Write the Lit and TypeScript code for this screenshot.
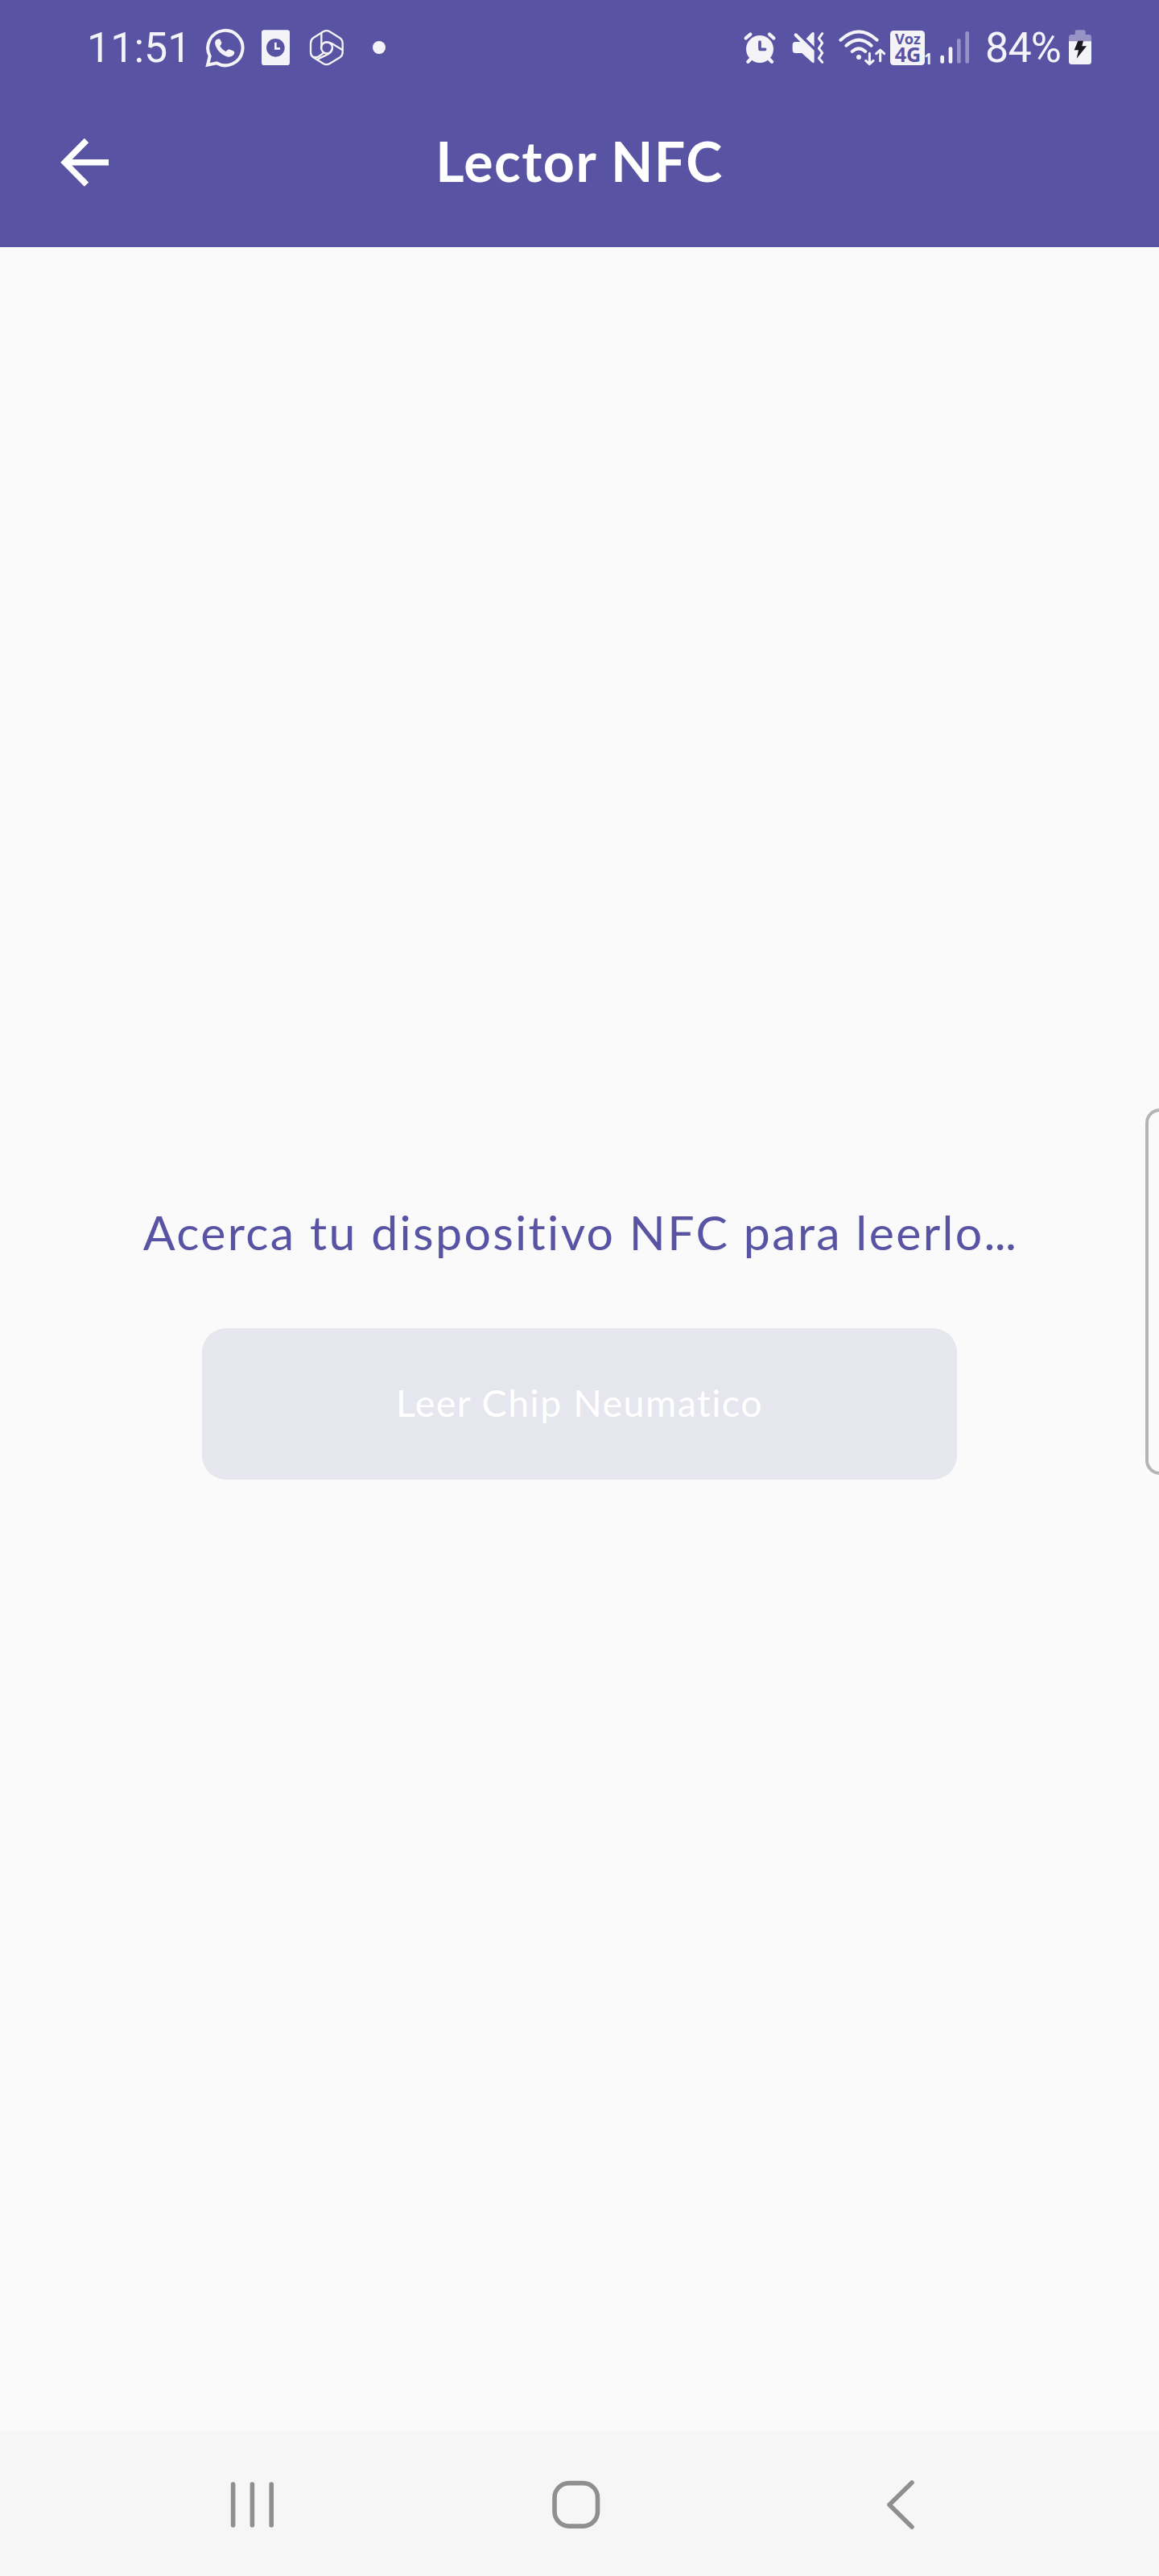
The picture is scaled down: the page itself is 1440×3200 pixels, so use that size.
import { LitElement, html, css } from "lit";
import { customElement, property } from "lit/decorators.js";

@customElement("status-bar")
class StatusBar extends LitElement {
  @property() time = "11:51";
  @property() battery = "84%";

  static styles = css`
    :host { display: flex; justify-content: space-between; box-sizing: border-box; height: 118px; padding: 0 84px 0 108px; color: #f4f3f8; }
    .group { display: flex; align-items: flex-start; }
    svg { display: block; flex: none; fill: #f4f3f8; overflow: visible; }
    .line { fill: none; stroke: #f4f3f8; stroke-linecap: round; stroke-linejoin: round; }
    .sharp { stroke-linecap: butt; stroke-linejoin: miter; }
    .cut { fill: #5853a2; }
    .cutline { fill: none; stroke: #5853a2; }
    .dim { fill: #9793c4; }
    .dark { fill: #1c1a22; }
    .label { font-family: "Roboto", sans-serif; font-size: 52px; line-height: 60px; margin-top: 30px; white-space: nowrap; }
    .time { width: 147px; }
    .percent { width: 104px; letter-spacing: -0.8px; }
    .tag { font-family: "Open Sans", "Noto Sans", sans-serif; font-weight: 700; }
    .whatsapp { margin: 35px 22px 0 0; }
    .card { margin: 37px 25px 0 0; }
    .hex { margin: 37px 36px 0 0; }
    .dot { margin-top: 51px; }
    .alarm { margin: 40px 20px 0 0; }
    .mute { margin: 40px 18px 0 0; }
    .wifi { margin: 37px 6px 0 0; }
    .volte { margin: 38px 11px 0 0; }
    .signal { margin: 39px 19px 0 0; }
    .cell { margin-top: 37px; }
  `;

  render() {
    return html`
      <div class="group">
        <span class="label time">${this.time}</span>
        <svg class="whatsapp" width="48" height="49" viewBox="45 45 144 147">
          <path class="line sharp" stroke-width="12" d="M62 149 L54 182 L87 175 A65 65 0 1 0 62 149Z" />
          <path d="M84 90q8-8 16-4l6 12q1 6-6 13q8 15 22 21q7-8 11-8q4 0 20 8q3 9-6 16q-10 6-22 3Q96 141 84 112Q79 98 84 90Z" />
        </svg>
        <svg class="card" width="35" height="44" viewBox="255 51 105 132">
          <rect x="255" y="52" width="105" height="131" rx="10" />
          <circle class="cut" cx="307" cy="118" r="34" />
          <path class="line sharp" stroke-width="8" d="M307 98V121H324" />
        </svg>
        <svg class="hex" width="42" height="44" viewBox="434 51 126 132">
          <g class="line" stroke-width="7">
            <path d="M484 58Q496 51 508 58L545 81Q556 88 556 101V135Q556 147 546 154L508 177Q496 184 484 177L447 154Q437 147 437 135V101Q437 88 447 81Z" />
            <circle cx="497" cy="118" r="21" />
            <path d="M477 63V118M487 99Q500 94 516 102L555 126M517 122Q516 132 505 140L461 162M445 152Q458 156 468 150L486 136" />
          </g>
        </svg>
        <svg class="dot" width="16" height="16" viewBox="0 0 16 16"><circle cx="8" cy="8" r="8" /></svg>
      </div>
      <div class="group">
        <svg class="alarm" width="40" height="40" viewBox="72 60 120 120">
          <circle cx="132" cy="123" r="51" />
          <path class="line" stroke-width="13" d="M80 82L97 68M168 68L184 82M88 170L102 156M177 170L163 156" />
          <path class="cutline" stroke-width="11" stroke-linecap="round" stroke-linejoin="round" d="M132 96V124H152" />
        </svg>
        <svg class="mute" width="40" height="40" viewBox="253 60 120 120">
          <path d="M262 66Q266 62 271 65L336 128V170Q335 177 329 173L290 138H266Q255 138 255 127V107Q255 96 266 96H284L263 75Q259 70 262 66ZM336 64V114L306 84L328 61Q335 58 336 64Z" />
          <path class="line" stroke-width="9" d="M366 65L353 83L366 100L353 120L366 137L353 157L366 172" />
        </svg>
        <svg class="wifi" width="58" height="44" viewBox="427 51 174 132">
          <path class="line" stroke-width="12" d="M434 89Q502 27 570 89M455 110Q502 68 549 110M477 132Q502 110 527 132" />
          <circle cx="502" cy="153" r="9" />
          <path class="line" stroke-width="9" d="M542 139V178M528 166L542 179L556 166M582 167V127M567 140L582 126L597 140" />
        </svg>
        <svg class="volte" width="51" height="43" viewBox="618 54 153 129">
          <rect x="618" y="54" width="129" height="129" rx="13" />
          <text class="tag cut" x="636" y="105" font-size="54" textLength="96" lengthAdjust="spacingAndGlyphs">Voz</text>
          <text class="tag cut" x="635" y="170" font-size="74" textLength="98" lengthAdjust="spacingAndGlyphs">4G</text>
          <text class="tag" x="745" y="181" font-size="60" textLength="30" lengthAdjust="spacingAndGlyphs">1</text>
        </svg>
        <svg class="signal" width="37" height="40" viewBox="235 58 111 120">
          <rect x="236" y="147" width="14" height="30" rx="6" />
          <rect x="267" y="116" width="14" height="61" rx="6" />
          <rect class="dim" x="298" y="85" width="14" height="92" rx="6" />
          <rect class="dim" x="329" y="58" width="14" height="119" rx="6" />
        </svg>
        <span class="label percent">${this.battery}</span>
        <svg class="cell" width="28" height="43" viewBox="714 51 84 129">
          <path class="dim" d="M714 96V79Q714 69 724 69H737V58Q737 52 743 52H770Q776 52 776 58V69H788Q798 69 798 79V96Z" />
          <path d="M714 94H798V169Q798 180 788 180H724Q714 180 714 169Z" />
          <path class="dark" d="M748 92H768L763 112H780L743 158L750 127H734Z" />
        </svg>
      </div>
    `;
  }
}

@customElement("nav-bar")
class NavBar extends LitElement {
  static styles = css`
    :host { display: flex; align-items: flex-start; box-sizing: border-box; height: 180px; padding: 61px 303px 0 286px; background: #f6f6f6; }
    svg { display: block; flex: none; fill: none; stroke: #8f8f8f; stroke-width: 5.6; stroke-linecap: round; stroke-linejoin: round; }
    .recents { margin-right: 344px; }
    .home { margin-right: 355px; }
  `;
  render() {
    return html`
      <svg class="recents" width="56" height="62" viewBox="286 3081 56 62"><path d="M289.6 3086V3137M313.4 3086V3137M337.2 3086V3137" /></svg>
      <svg class="home" width="60" height="62" viewBox="686 3081 60 62"><rect x="689" y="3084.6" width="53.5" height="53.5" rx="18" /></svg>
      <svg width="36" height="62" viewBox="1101 3081 36 62"><path d="M1133 3084L1105 3111.5L1133 3139" /></svg>
    `;
  }
}

@customElement("app-root")
class AppRoot extends LitElement {
  static styles = css`
    :host { display: flex; flex-direction: column; position: relative; overflow: hidden; box-sizing: border-box; width: 1440px; height: 3200px; background: #fafafa; font-family: "Lato", "Open Sans", sans-serif; }
    .top { flex: none; height: 307px; background: #5853a2; color: #fff; }
    .appbar { display: grid; grid-template-columns: 64px 1fr 64px; align-items: center; padding: 42px 73px 0 73px; height: 80px; }
    .back { display: block; fill: none; stroke: #fff; stroke-width: 7.5; margin-top: 4px; }
    .title { margin: 0; text-align: center; font-size: 68px; line-height: 80px; font-weight: 700; white-space: nowrap; letter-spacing: 1.5px; }
    .content { flex: 1; display: flex; flex-direction: column; align-items: center; padding-top: 1184px; }
    .message { margin: 0; font-size: 59px; line-height: 80px; color: #5853a2; white-space: nowrap; letter-spacing: 2.35px; }
    .dots { letter-spacing: -0.7px; }
    .action { margin-top: 79px; width: 938px; height: 188px; padding: 0 0 4px; border: 0; border-radius: 30px; background: #e6e6ef; color: #fff; font: 400 46.5px/60px "Lato", "Open Sans", sans-serif; letter-spacing: 1.5px; }
    .edge { position: absolute; right: -20px; top: 1377px; width: 37px; height: 455px; box-sizing: border-box; border: 4px solid #b4b4b4; border-radius: 18px; }
  `;
  render() {
    return html`
      <header class="top">
        <status-bar></status-bar>
        <div class="appbar">
          <svg class="back" width="64" height="62" viewBox="73 171 64 62"><path d="M135 201.8H81M107.5 174.5L80.5 201.8L107.5 229.2" /></svg>
          <h1 class="title">Lector NFC</h1>
        </div>
      </header>
      <main class="content">
        <p class="message">Acerca tu dispositivo NFC para leerlo<span class="dots">...</span></p>
        <button class="action" disabled>Leer Chip Neumatico</button>
      </main>
      <div class="edge"></div>
      <nav-bar></nav-bar>
    `;
  }
}
